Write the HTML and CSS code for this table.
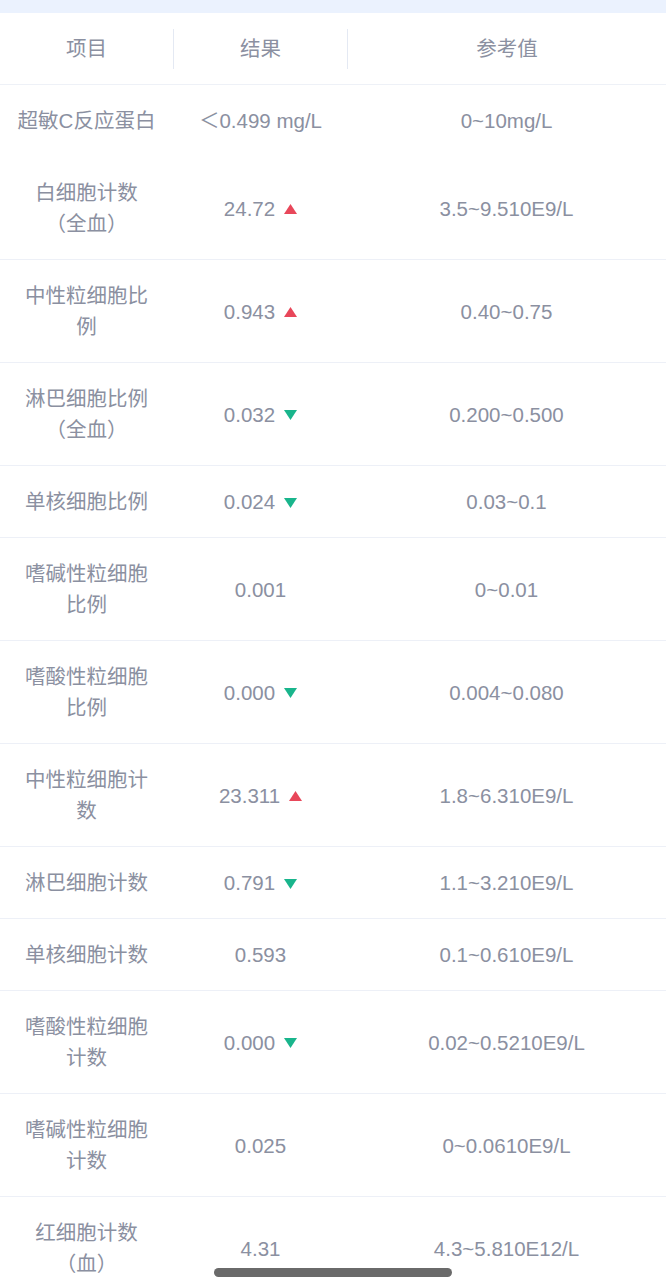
FILE: index.html
```html
<!DOCTYPE html>
<html lang="zh-CN">
<head>
<meta charset="utf-8">
<title>检验结果</title>
<link rel="stylesheet" href="styles.css">
</head>
<body>
<div class="topbar"></div>
<div class="table">
  <div class="head">
    <div class="hcell">项目</div>
    <div class="hcell sep">结果</div>
    <div class="hcell sep">参考值</div>
  </div>

  <div class="row noline">
    <div class="cell name">超敏C反应蛋白</div>
    <div class="cell val">＜0.499 mg/L</div>
    <div class="cell ref">0~10mg/L</div>
  </div>

  <div class="row">
    <div class="cell name">白细胞计数<br>（全血）</div>
    <div class="cell val">24.72<svg class="tri" viewBox="0 0 13 10"><path d="M6.5 0L13 10H0Z" fill="#e8475a"/></svg></div>
    <div class="cell ref">3.5~9.510E9/L</div>
  </div>

  <div class="row">
    <div class="cell name">中性粒细胞比<br>例</div>
    <div class="cell val">0.943<svg class="tri" viewBox="0 0 13 10"><path d="M6.5 0L13 10H0Z" fill="#e8475a"/></svg></div>
    <div class="cell ref">0.40~0.75</div>
  </div>

  <div class="row">
    <div class="cell name">淋巴细胞比例<br>（全血）</div>
    <div class="cell val">0.032<svg class="tri" viewBox="0 0 13 10"><path d="M0 0H13L6.5 10Z" fill="#19b58c"/></svg></div>
    <div class="cell ref">0.200~0.500</div>
  </div>

  <div class="row">
    <div class="cell name">单核细胞比例</div>
    <div class="cell val">0.024<svg class="tri" viewBox="0 0 13 10"><path d="M0 0H13L6.5 10Z" fill="#19b58c"/></svg></div>
    <div class="cell ref">0.03~0.1</div>
  </div>

  <div class="row">
    <div class="cell name">嗜碱性粒细胞<br>比例</div>
    <div class="cell val">0.001</div>
    <div class="cell ref">0~0.01</div>
  </div>

  <div class="row">
    <div class="cell name">嗜酸性粒细胞<br>比例</div>
    <div class="cell val">0.000<svg class="tri" viewBox="0 0 13 10"><path d="M0 0H13L6.5 10Z" fill="#19b58c"/></svg></div>
    <div class="cell ref">0.004~0.080</div>
  </div>

  <div class="row">
    <div class="cell name">中性粒细胞计<br>数</div>
    <div class="cell val">23.311<svg class="tri" viewBox="0 0 13 10"><path d="M6.5 0L13 10H0Z" fill="#e8475a"/></svg></div>
    <div class="cell ref">1.8~6.310E9/L</div>
  </div>

  <div class="row">
    <div class="cell name">淋巴细胞计数</div>
    <div class="cell val">0.791<svg class="tri" viewBox="0 0 13 10"><path d="M0 0H13L6.5 10Z" fill="#19b58c"/></svg></div>
    <div class="cell ref">1.1~3.210E9/L</div>
  </div>

  <div class="row">
    <div class="cell name">单核细胞计数</div>
    <div class="cell val">0.593</div>
    <div class="cell ref">0.1~0.610E9/L</div>
  </div>

  <div class="row">
    <div class="cell name">嗜酸性粒细胞<br>计数</div>
    <div class="cell val">0.000<svg class="tri" viewBox="0 0 13 10"><path d="M0 0H13L6.5 10Z" fill="#19b58c"/></svg></div>
    <div class="cell ref">0.02~0.5210E9/L</div>
  </div>

  <div class="row">
    <div class="cell name">嗜碱性粒细胞<br>计数</div>
    <div class="cell val">0.025</div>
    <div class="cell ref">0~0.0610E9/L</div>
  </div>

  <div class="row">
    <div class="cell name">红细胞计数<br>（血）</div>
    <div class="cell val">4.31</div>
    <div class="cell ref">4.3~5.810E12/L</div>
  </div>
</div>
<div class="home-indicator"></div>
</body>
</html>
```

FILE: styles.css
```css
html, body {
  margin: 0;
  padding: 0;
  background: #ffffff;
}
body {
  font-family: "Liberation Sans", "Noto Sans CJK SC", sans-serif;
  font-size: 20.5px;
  color: #8b90a1;
}
.topbar {
  height: 13px;
  background: #ebf2fe;
}
.table {
  display: flex;
  flex-direction: column;
}
.head {
  display: grid;
  grid-template-columns: 173px 174px 1fr;
  align-items: center;
  height: 71px;
  border-bottom: 1px solid #eef1f7;
}
.hcell {
  height: 40px;
  line-height: 40px;
  text-align: center;
}
.hcell.sep {
  border-left: 1px solid #e4e9f3;
}
.row {
  display: grid;
  grid-template-columns: 173px 174px 1fr;
  align-items: center;
  padding: 20px 0;
  line-height: 31px;
  border-bottom: 1px solid #edf0f7;
}
.row.noline {
  border-bottom-color: transparent;
}
.cell {
  text-align: center;
}
.val {
  display: flex;
  justify-content: center;
  align-items: center;
  gap: 9px;
  padding-left: 1px;
}
.tri {
  width: 13px;
  height: 10px;
  flex: none;
  margin-top: 2px;
}
.home-indicator {
  position: fixed;
  left: 214px;
  bottom: 3px;
  width: 238px;
  height: 9px;
  border-radius: 5px;
  background: #6a6a6a;
}
```
